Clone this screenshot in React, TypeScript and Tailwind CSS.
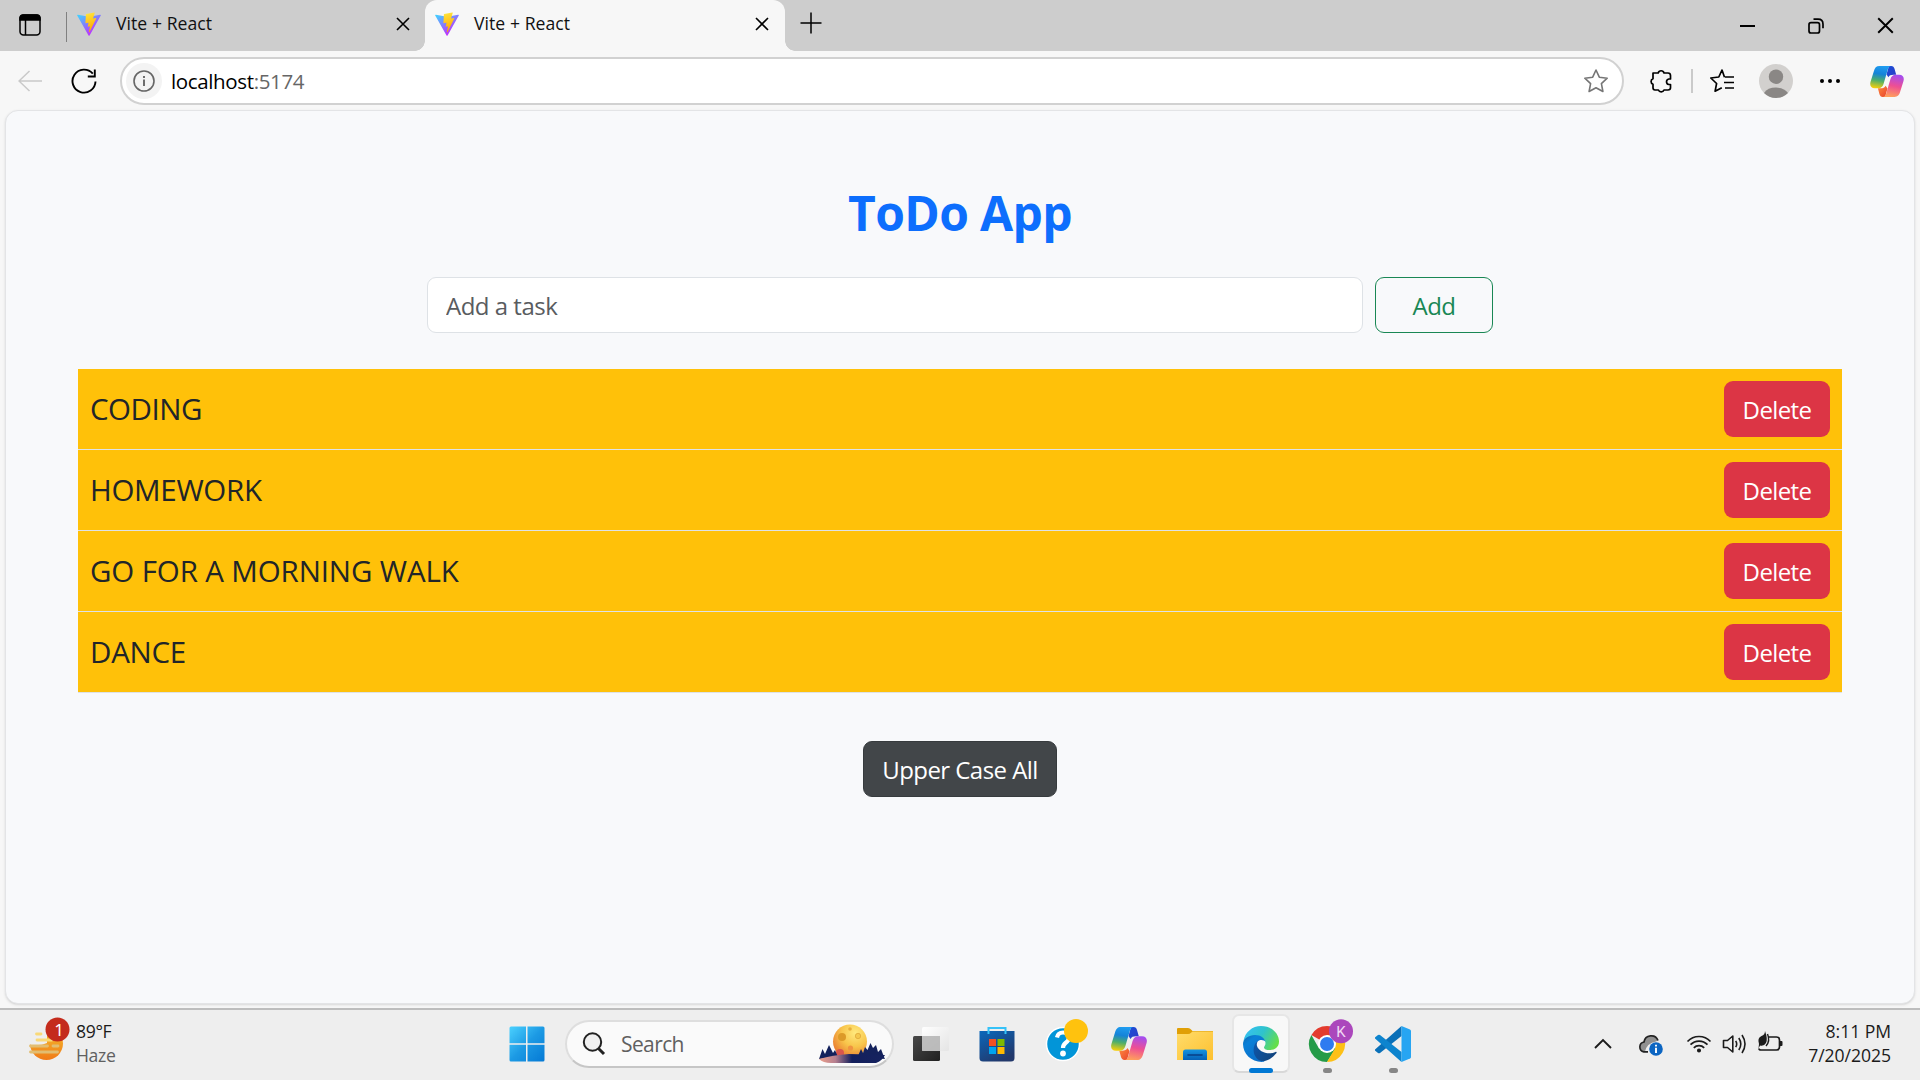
import { ReactNode } from 'react';

const tasks = [
  { text: 'CODING', tracking: 'tracking-[-0.5px]' },
  { text: 'HOMEWORK', tracking: 'tracking-[-0.3px]' },
  { text: 'GO FOR A MORNING WALK', tracking: 'tracking-[-0.12px]' },
  { text: 'DANCE', tracking: 'tracking-[-0.25px]' },
];

function ViteLogo({ id }: { id: string }) {
  return (
    <svg width="24" height="24" viewBox="0 0 32 32" className="shrink-0">
      <defs>
        <linearGradient id={`${id}a`} x1="0" x2="0.6" y1="0.05" y2="0.9">
          <stop offset="0" stopColor="#41D1FF" />
          <stop offset="1" stopColor="#BD34FE" />
        </linearGradient>
        <linearGradient id={`${id}b`} x1="0.4" x2="0.55" y1="0" y2="0.9">
          <stop offset="0" stopColor="#FFEA4A" />
          <stop offset="0.1" stopColor="#FFDD35" />
          <stop offset="1" stopColor="#FFA800" />
        </linearGradient>
      </defs>
      <path fill={`url(#${id}a)`} d="M31.7 4.8 16.8 31.4a.8.8 0 0 1-1.4 0L.3 4.8a.8.8 0 0 1 .9-1.2l14.8 2.6h.3l14.500-2.6a.8.8 0 0 1 .9 1.2Z" />
      <path fill={`url(#${id}b)`} d="M23.100.6 12.200 2.700a.4.4 0 0 0-.3.4l-.7 11.400a.4.4 0 0 0 .5.4l3.100-.7a.4.4 0 0 1 .5.5l-.9 4.500a.4.4 0 0 0 .5.5l1.900-.6a.4.4 0 0 1 .5.5l-1.500 7c-.1.4.5.700.700.3l.2-.3 9-18a.4.4 0 0 0-.4-.6l-3.200.6a.4.4 0 0 1-.5-.5l2.100-7.100a.4.4 0 0 0-.6-.4Z" />
    </svg>
  );
}

function CopilotLogo({ id, className }: { id: string; className: string }) {
  return (
    <svg viewBox="0 0 36 33" className={className}>
      <defs>
        <linearGradient id={`${id}a`} x1="0.5" x2="0.35" y1="0" y2="1">
          <stop offset="0" stopColor="#1f9cf0" />
          <stop offset="0.35" stopColor="#1583d8" />
          <stop offset="0.65" stopColor="#4dae6b" />
          <stop offset="1" stopColor="#f5cf0b" />
        </linearGradient>
        <linearGradient id={`${id}b`} x1="0.6" x2="0.4" y1="0" y2="1">
          <stop offset="0" stopColor="#a44df0" />
          <stop offset="0.5" stopColor="#ee4f93" />
          <stop offset="1" stopColor="#ffa05c" />
        </linearGradient>
        <linearGradient id={`${id}c`} x1="0" x2="1" y1="0" y2="1">
          <stop offset="0" stopColor="#1b4fd8" />
          <stop offset="1" stopColor="#2a3bc5" />
        </linearGradient>
        <linearGradient id={`${id}d`} x1="0" x2="1" y1="0" y2="1">
          <stop offset="0" stopColor="#ff8a3d" />
          <stop offset="1" stopColor="#e8432e" />
        </linearGradient>
      </defs>
      <path fill={`url(#${id}c)`} d="M20 0h2.500c2 0 3 1.300 3.500 3l1.800 6.300H25c-3 0-4.500.7-5.500 2.700L17.500 9Z" />
      <path fill={`url(#${id}d)`} d="M16 33h-2.500c-2 0-3-1.500-3.500-3l-1.700-6.300H11c3 0 4.500-.7 5.500-2.700l2 3Z" />
      <path fill={`url(#${id}a)`} d="M10 0h12.500c-2 0-3 1.500-3.600 3.500l-4.500 15.500c-1 3-2.500 4.800-5.900 4.800H5C1 23.800-.7 21 .5 16.800L4 5.500C5 2 6.500 0 10 0Z" />
      <path fill={`url(#${id}b)`} d="M26 33H13.500c2 0 3-1.500 3.600-3.500L21.600 14c1-3 2.500-4.800 5.900-4.800H31c4 0 5.700 2.800 4.500 7L32 27.500C31 31 29.500 33 26 33Z" />
    </svg>
  );
}

function CloseX({ size = 14 }: { size?: number }) {
  return (
    <svg width={size} height={size} viewBox="0 0 14 14" className="shrink-0" fill="none" stroke="#000" strokeWidth="1.600">
      <path d="m1 1 12 12M13 1 1 13" />
    </svg>
  );
}

function TabBar() {
  return (
    <div className="flex h-[51px] bg-[#cdcdcd] text-[17.6px] tracking-[0.05px] text-[#111]">
      <div className="flex h-[50px] w-[67px] items-center justify-between pl-[19px]">
        <svg width="22" height="22" viewBox="0 0 22 22" fill="none" stroke="#000" strokeWidth="1.500">
          <rect x="1" y="1" width="20" height="20" rx="3.500" />
          <path d="M1 3.500Q1.500 1 4 1h14q2.500 0 3 2.500V6H1Z" fill="#000" />
          <path d="M6.500 6v15" />
        </svg>
        <div className="mt-1 h-[30px] w-[1.500px] bg-[#808080]" />
      </div>
      <div className="flex h-12 w-[358px] items-center pr-[15px] pl-[10px]">
        <ViteLogo id="v1" />
        <span className="-mt-px ml-[15px] flex-1">Vite + React</span>
        <CloseX />
      </div>
      <div className="relative flex h-[51px] w-[360px] items-center rounded-t-[12px] bg-[#f7f7f7] pr-[16px] pb-[3px] pl-[10px]">
        <div className="absolute bottom-0 -left-[10px] size-[10px] bg-[radial-gradient(circle_at_0_0,#cdcdcd_9.500px,#f7f7f7_10px)]" />
        <div className="absolute -right-[10px] bottom-0 size-[10px] bg-[radial-gradient(circle_at_100%_0,#cdcdcd_9.500px,#f7f7f7_10px)]" />
        <ViteLogo id="v2" />
        <span className="-mt-px ml-[15px] flex-1">Vite + React</span>
        <CloseX />
      </div>
      <svg width="22" height="22" viewBox="0 0 22 22" className="mt-[12px] ml-[15px]" stroke="#000" strokeWidth="1.500">
        <path d="M11 .5v21M.5 11h21" />
      </svg>
      <div className="ml-auto flex h-[51px] items-center gap-[53px] pr-[26px]">
        <div className="h-[2px] w-[15px] bg-black" />
        <svg width="16" height="16" viewBox="0 0 16 16" fill="none" stroke="#000" strokeWidth="1.700">
          <rect x="1" y="4.700" width="10.500" height="10.300" rx="2" />
          <path d="M5.500 1.200H10q5 0 5 5v4" />
        </svg>
        <CloseX size={17} />
      </div>
    </div>
  );
}

function Toolbar() {
  return (
    <div className="flex h-[59px] items-center pt-px pr-4 pl-[18px]">
      <svg width="25" height="22" viewBox="0 0 25 22" className="-mt-px" fill="none" stroke="#c9c9c9" strokeWidth="1.500">
        <path d="M24 11H1M11.500 1 1 11l10.500 10" />
      </svg>
      <svg width="26" height="26" viewBox="0 0 26 26" className="ml-7" fill="none" stroke="#000" strokeWidth="1.900">
        <path d="M24.500 13.500A11.500 11.500 0 1 1 21.800 5.700M23.800 1.500v7h-7" />
      </svg>
      <div className="ml-[23px] flex h-12 w-[1504px] items-center rounded-full border-2 border-[#d1d1d1] bg-white pr-[13px] pl-1">
        <div className="flex size-9 items-center justify-center rounded-full bg-[#f3f3f3]">
          <svg width="22" height="22" viewBox="0 0 22 22" fill="none" stroke="#666" strokeWidth="1.600">
            <circle cx="11" cy="11" r="10" />
            <path d="M11 9.500V16M11 6v2" strokeWidth="1.900" />
          </svg>
        </div>
        <span className="ml-[9px] flex-1 text-[20.500px] tracking-[-0.36px] text-black">
          localhost<span className="text-[#666]">:5174</span>
        </span>
        <svg width="26" height="26" viewBox="0 0 26 26" fill="none" stroke="#767676" strokeWidth="1.600" strokeLinejoin="round">
          <path d="m13 2 3.300 7.200 7.900 1-5.800 5.400 1.500 7.900L13 19.700l-6.900 3.800 1.500-7.900-5.800-5.400 7.900-1Z" />
        </svg>
      </div>
      <svg width="24" height="26" viewBox="0 0 24 26" className="ml-[25px]" fill="none" stroke="#000" strokeWidth="1.700" strokeLinejoin="round">
        <path d="M4 5h5.200a3 3 0 0 1 5.800 0h4q2.500 0 2.500 2.500V11h-1.700a2.800 2.800 0 0 0 0 5.500h1.700v3.300q0 2.200-2.500 2.200h-4a3 3 0 0 1-5.600 0H6q-2 0-2-2.200v-3.500a3 3 0 0 1 0-5.600Z" />
      </svg>
      <div className="ml-[18px] h-6 w-[1.500px] bg-[#cacaca]" />
      <svg width="26" height="26" viewBox="0 0 26 26" className="ml-[16px]" fill="none" stroke="#000" strokeWidth="1.700" strokeLinejoin="round">
        <path d="M15.500 9.200 13 2 9.800 9 1.800 10l5.800 5.500-1.500 7.700 6.700-3.500M16 9h9M15 14.500h10M16 20h9" />
      </svg>
      <svg width="34" height="34" viewBox="0 0 34 34" className="-mt-px ml-[24px]">
        <circle cx="17" cy="17" r="17" fill="#d2d0ce" />
        <circle cx="17" cy="12.700" r="7.200" fill="#8a8785" />
        <path d="M5 29a13.500 10 0 0 1 24 0 17 17 0 0 1-24 0Z" fill="#8a8785" />
      </svg>
      <div className="ml-[27px] flex gap-1">
        <i className="size-1 rounded-full bg-black" />
        <i className="size-1 rounded-full bg-black" />
        <i className="size-1 rounded-full bg-black" />
      </div>
      <CopilotLogo id="cpA" className="ml-auto h-[31px] w-[34px]" />
    </div>
  );
}

function TodoPage() {
  return (
    <div className="mx-[5px] flex h-[894px] flex-col items-center rounded-[13px] border border-[#e3e4e6] bg-[#f8f9fb] px-[72px] text-2xl text-[#212529] shadow-sm">
      <h1 className="mt-[73px] text-[48px] leading-[58px] font-bold tracking-[-0.650px] text-[#0d6efd]">ToDo App</h1>
      <div className="mt-[35px] flex gap-3">
        <input
          placeholder="Add a task"
          className="h-14 w-[936px] rounded-[9px] border border-[#dee2e6] bg-white px-[18px] pt-px tracking-[-0.5px] outline-none placeholder:text-[#595c5f]"
        />
        <button className="h-14 w-[118px] rounded-[9px] border border-[#198754] pt-px tracking-[-0.5px] text-[#198754]">Add</button>
      </div>
      <ul className="mt-9 w-full">
        {tasks.map((task) => (
          <li key={task.text} className="flex h-[81px] items-center justify-between border-b border-[#dee2e6] bg-[#ffc109] px-3 text-[29.500px]">
            <span className={task.tracking}>{task.text}</span>
            <button className="h-14 w-[106px] rounded-[9px] bg-[#dc3545] pt-px text-2xl tracking-[-0.6px] text-white">Delete</button>
          </li>
        ))}
      </ul>
      <button className="mt-12 h-14 w-[194px] rounded-[9px] border border-[#373b3e] bg-[#424649] pt-px tracking-[-0.55px] text-white">Upper Case All</button>
    </div>
  );
}

function WeatherWidget() {
  return (
    <div className="flex w-[509px] items-start pl-7">
      <svg width="44" height="46" viewBox="0 0 44 46" className="mt-[6px]">
        <defs>
          <linearGradient id="sun" x1="0.5" x2="0.5" y1="0" y2="1">
            <stop offset="0" stopColor="#f5c330" />
            <stop offset="1" stopColor="#f07a18" />
          </linearGradient>
        </defs>
        <circle cx="18.500" cy="27.500" r="16.500" fill="url(#sun)" />
        <path d="M0 8h19v19q-6 3-16 2L0 27Z" fill="#eee" />
        <g strokeWidth="2.800" strokeLinecap="round">
          <path d="M8.500 18H13M9 24h15" stroke="#f9d978" />
          <path d="M2.500 30h17M25 30h5M2.500 36h27" stroke="#e2bd71" />
        </g>
        <circle cx="29.500" cy="13.500" r="12" fill="#c42b1c" />
        <text x="31" y="19.500" textAnchor="middle" fontSize="17" fill="#fff" fontFamily="Noto Sans">1</text>
      </svg>
      <div className="mt-[9px] ml-[4px] text-[17.600px] leading-6 tracking-[-0.35px] text-[#1b1b1b]">
        <div>89°F</div>
        <div className="text-[#606060]">Haze</div>
      </div>
    </div>
  );
}

function SearchBox() {
  return (
    <div className="ml-[20px] flex h-12 w-[329px] items-center rounded-full border-2 border-[#dedede] border-b-[#c6c6c6] bg-[#fafafa] pr-[7px] pl-[15px]">
      <svg width="24" height="24" viewBox="0 0 24 24" fill="none" stroke="#222">
        <circle cx="10.500" cy="10" r="8.700" fill="#f0f0f0" strokeWidth="2" />
        <path d="m16.500 16.500 5.500 5.500" strokeWidth="3" />
      </svg>
      <span className="ml-[15px] flex-1 pt-[2px] text-[21px] tracking-[-0.6px] text-[#606060]">Search</span>
      <svg width="66" height="40" viewBox="0 0 66 40">
        <defs>
          <radialGradient id="moon" cx="0.65" cy="0.25" r="0.8">
            <stop offset="0" stopColor="#ffe97d" />
            <stop offset="0.5" stopColor="#f8c54b" />
            <stop offset="1" stopColor="#e8762e" />
          </radialGradient>
          <linearGradient id="hill">
            <stop offset="0.05" stopColor="#e29a8c" />
            <stop offset="0.25" stopColor="#b57f90" />
            <stop offset="0.5" stopColor="#131f5c" />
            <stop offset="1" stopColor="#16235f" />
          </linearGradient>
        </defs>
        <circle cx="31" cy="17.500" r="17" fill="url(#moon)" />
        <circle cx="23" cy="13" r="4" fill="#dc9a28" />
        <circle cx="39" cy="12" r="2.700" fill="#f4c84e" stroke="#d99c30" strokeWidth=".6" />
        <circle cx="31.500" cy="24" r="2.600" fill="#f09440" />
        <circle cx="31" cy="5" r="1.800" fill="#e8ae3a" />
        <circle cx="21" cy="29" r="4" fill="#d9564c" />
        <path fill="#14225c" d="m0 35 3.500-10 2.500 5 4-9 4 8 2-3 3 7ZM39 32l3-7 2 4 2-6 2.500 3 3-7 2.500 5 3-3 2 7 3-3 3 8 1 2Z" />
        <path fill="url(#hill)" d="M0 35q14-4 30-5l36 1q-3 6-9 8H12Q4 39 0 35Z" />
      </svg>
    </div>
  );
}

function Cell({ children, active, bar }: { children: ReactNode; active?: boolean; bar?: 'wide' | 'dot' }) {
  return (
    <div className="relative flex h-[70px] w-[66px] items-center justify-center pb-[2px]">
      {active && <div className="absolute top-[4px] left-[4px] h-[59px] w-[58px] rounded-[7px] border-2 border-[#e6e6e6] border-b-[#d8d8d8] bg-[#f8f8f8]" />}
      <div className="relative">{children}</div>
      {bar === 'wide' && <div className="absolute top-[58px] left-[21px] h-[5px] w-6 rounded-full bg-[#0078d4]" />}
      {bar === 'dot' && <div className="absolute top-[58px] left-[29px] h-[5px] w-[9px] rounded-full bg-[#868686]" />}
    </div>
  );
}

function TaskIcons() {
  return (
    <div className="ml-[3.500px] flex">
      <Cell>
        <svg width="36" height="36" viewBox="0 0 36 36">
          <defs>
            <linearGradient id="tvD" x1="0" x2="1" y1="0" y2="1"><stop stopColor="#484848" /><stop offset="1" stopColor="#202020" /></linearGradient>
            <linearGradient id="tvL" x1="0" x2="1" y1="0" y2="1"><stop stopColor="#fff" stopOpacity=".95" /><stop offset="1" stopColor="#e4e4e4" stopOpacity=".9" /></linearGradient>
          </defs>
          <rect y="10" width="27" height="25" rx="1.500" fill="url(#tvD)" />
          <rect x="9" y="1" width="27" height="24" rx="1.500" fill="url(#tvL)" />
          <rect x="9" y="10" width="18" height="15" fill="#b5b5b5" fillOpacity=".85" />
        </svg>
      </Cell>
      <Cell>
        <svg width="36" height="36" viewBox="0 0 36 36">
          <defs>
            <linearGradient id="bag" x1="0" x2=".6" y1="0" y2="1"><stop stopColor="#0a68bc" /><stop offset="1" stopColor="#22386b" /></linearGradient>
          </defs>
          <path d="M.5 5h35v27q0 3.500-3.500 3.500H4Q.5 35.500.5 32Z" fill="url(#bag)" />
          <path d="M9.500 8V2h17v6" fill="none" stroke="#35c2f8" strokeWidth="2" />
          <path d="M10 13h7v7h-7z" fill="#f25022" />
          <path d="M18.500 13h7v7h-7z" fill="#7fba00" />
          <path d="M10 21h7v7h-7z" fill="#00a4ef" />
          <path d="M18.500 21h7v7h-7z" fill="#ffb900" />
        </svg>
      </Cell>
      <Cell>
        <svg width="50" height="50" viewBox="0 0 50 50">
          <circle cx="25" cy="25" r="16.500" fill="#0295d8" stroke="#fff" strokeWidth="1.500" />
          <path d="M19 18.500q1-5 6-5 6 0 6 5 0 3-3.500 5.500-2.500 2-2.500 5" fill="none" stroke="#fff" strokeWidth="4.200" />
          <circle cx="25" cy="34.500" r="2.900" fill="#fff" />
          <circle cx="38" cy="12" r="12" fill="#ffc20e" />
        </svg>
      </Cell>
      <Cell><CopilotLogo id="cpB" className="mt-[-1px] h-[33px] w-9" /></Cell>
      <Cell>
        <svg width="36" height="36" viewBox="0 0 36 36">
          <defs>
            <linearGradient id="fold" x1="0" x2="1" y1="0" y2="1"><stop stopColor="#ffdc6b" /><stop offset="1" stopColor="#fdc02f" /></linearGradient>
            <linearGradient id="foldB" x1="0" x2="0" y1="0" y2="1"><stop stopColor="#1694e0" /><stop offset="1" stopColor="#0560b6" /></linearGradient>
          </defs>
          <path d="M0 3q0-1 1-1h10q2 0 3 1.500L15.500 5H36v5H0Z" fill="#e09f06" />
          <path d="M0 8h11q2 0 3-1.200L15.500 5.500H36V34H0Z" fill="url(#fold)" />
          <path d="M6 34V26q0-2.500 2.500-2.500h19Q30 23.500 30 26v8Z" fill="url(#foldB)" />
          <path d="M11 29h14" stroke="#083f85" strokeWidth="1.600" strokeLinecap="round" />
        </svg>
      </Cell>
      <Cell active bar="wide">
        <svg width="36" height="36" viewBox="0 0 36 36">
          <defs>
            <linearGradient id="eT" x1="0" x2="1" y1=".2" y2=".6"><stop stopColor="#36bff5" /><stop offset=".5" stopColor="#2fc3cc" /><stop offset="1" stopColor="#66df48" /></linearGradient>
            <linearGradient id="eL" x1="0" x2=".7" y1="0" y2="1"><stop stopColor="#0f66ac" /><stop offset=".3" stopColor="#0a80d8" /><stop offset="1" stopColor="#0b6cc6" /></linearGradient>
            <linearGradient id="eB" x1="0" x2="1" y1="0" y2=".5"><stop stopColor="#0d57ad" /><stop offset="1" stopColor="#12457f" /></linearGradient>
          </defs>
          <path d="M.5 15C2 6 9.500 0 18 0c10 0 18 7 18 15.500 0 5.500-4 8.500-9 8.500-3.500 0-6-1-6-2.600 0-1 1.500-1.800 1.500-4.400 0-4-4.500-6.500-10-6.500Q4 10.500.5 15Z" fill="url(#eT)" />
          <path d="M0 18C0 12.500 6 9 12 9c6 0 10 3.500 10.500 7-2-3-9-3-10 4-1 7 4 12 10 13.500L21 35.800C9.500 37 0 28.500 0 18Z" fill="url(#eL)" />
          <path d="M15.500 14.500c-7 4.500-6.500 16 1.500 20 3 1.500 10 .5 16.500-7.500.5-.8-.2-1.500-1-1-7.500 3.500-17-.5-18.500-6-.6-2 .2-4.200 1.500-5.500Z" fill="url(#eB)" />
        </svg>
      </Cell>
      <Cell bar="dot">
        <svg width="52" height="50" viewBox="0 0 52 50">
          <path d="M26 25 10.400 16A18 18 0 0 1 41.600 16H26Z" fill="#e33b2e" />
          <path d="M10.400 16A18 18 0 0 0 26 43l9-14-17 .6Z" fill="#259b48" />
          <path d="M26 43a18 18 0 0 0 15.600-27H26l8 13.500Z" fill="#fdc016" />
          <circle cx="26" cy="25" r="9" fill="#fff" />
          <circle cx="26" cy="25" r="7" fill="#2f7bf0" />
          <circle cx="40" cy="12.200" r="12" fill="#ab47bc" />
          <text x="40" y="17.500" textAnchor="middle" fontSize="15" fill="#f0d8f4" fontFamily="Roboto">K</text>
        </svg>
      </Cell>
      <Cell bar="dot">
        <svg width="36" height="36" viewBox="0 0 36 36">
          <path d="M0 23.500 26.500 0v10L5 27q-1 .7-2 0l-2.500-2Q-.5 24.300 0 23.500Z" fill="#0a70b8" />
          <path d="M0 12.500 26.500 36V26L5 9q-1-.7-2 0L.5 11Q-.5 11.700 0 12.500Z" fill="#0d84ce" />
          <path d="M26.500 0 35 3.500q1 .5 1 1.500v26q0 1-1 1.500L26.500 36Z" fill="#27a5f2" />
        </svg>
      </Cell>
    </div>
  );
}

function SystemTray() {
  return (
    <div className="ml-auto flex pr-[29px] text-[#1b1b1b]">
      <svg width="18" height="11" viewBox="0 0 18 11" className="mt-[28px]" fill="none" stroke="#1b1b1b" strokeWidth="1.900">
        <path d="m1 10 8-8 8 8" />
      </svg>
      <svg width="26" height="22" viewBox="0 0 26 22" className="mt-[25px] ml-[26px]">
        <path d="M5.500 16.500a5 5 0 0 1 .3-9.500A7.300 7.300 0 0 1 19.500 5.500l-1.500 1Q9 8 7 16.500Z" fill="#909090" />
        <path d="M10 16.800H5.800A5 5 0 0 1 6 7 7.300 7.300 0 0 1 20 5.500" fill="none" stroke="#222" strokeWidth="1.700" />
        <circle cx="18" cy="14" r="6.800" fill="#0b65c2" />
        <path d="M18 12.700V18M18 9.800v1.800" stroke="#fff" strokeWidth="1.900" />
      </svg>
      <svg width="26" height="20" viewBox="0 0 26 20" className="mt-[24px] ml-[22px]" fill="none" stroke="#1b1b1b" strokeWidth="1.700">
        <path d="M1.500 7.500a15.700 15.700 0 0 1 23 0M4.500 10.700a11.700 11.700 0 0 1 17 0M7.800 13.800a7.200 7.200 0 0 1 10.400 0" />
        <circle cx="13" cy="16.500" r="1.200" fill="#1b1b1b" />
      </svg>
      <svg width="26" height="22" viewBox="0 0 26 22" className="mt-[23px] ml-[10px]" fill="none" stroke="#1b1b1b" strokeWidth="1.600" strokeLinejoin="round">
        <path d="M1.500 7.500h4L10.800 3v16L5.500 14.500h-4Z" />
        <path d="M13.700 7.800q2 3.200 0 6.400M16.800 5q4 6 0 12M20 2q6 9 0 18" />
      </svg>
      <svg width="26" height="22" viewBox="0 0 26 22" className="mt-[21px] ml-[9px]">
        <path d="M12 6h7.500q3 0 3 3v7q0 3-3 3H4q-2 0-2-1.500" fill="none" stroke="#1b1b1b" strokeWidth="1.700" />
        <path d="M23 10h1.500q1 0 1 1v3q0 1-1 1H23Z" fill="#1b1b1b" />
        <path d="M8 0q3 8 1 12-2 3.500-6 2.500l-1.500 3 .5-4.500Q0 7 4.500 5 8 4 8 0Z" fill="#1b1b1b" />
        <path d="M10.500 3q3 7-1.500 12" stroke="#1b1b1b" strokeWidth="1.400" fill="none" />
      </svg>
      <div className="mt-[9px] w-[108px] text-right text-[17.600px] leading-6 tracking-[-0.05px]">
        <div>8:11 PM</div>
        <div>7/20/2025</div>
      </div>
    </div>
  );
}

function Taskbar() {
  return (
    <div className="mt-auto flex h-[72px] border-t-2 border-[#bdbdbd] bg-[#eee]">
      <WeatherWidget />
      <div className="flex h-[68px] items-center">
        <svg width="36" height="36" viewBox="0 0 36 36">
          <defs>
            <linearGradient id="win" x1="0" x2="1" y1="0" y2="1"><stop stopColor="#4cd2ff" /><stop offset=".5" stopColor="#1c9ae4" /><stop offset="1" stopColor="#0478d4" /></linearGradient>
          </defs>
          <mask id="winm"><path fill="#fff" d="M2 .5h15v16.700H.5V2Q.5.5 2 .5Zm16.500 0H34q1.500 0 1.500 1.500v15.200h-17ZM.5 18.700H17v16.800H2q-1.500 0-1.500-1.500Zm18 0h17V34q0 1.500-1.500 1.500H18.500Z" /></mask>
          <rect width="36" height="36" fill="url(#win)" mask="url(#winm)" />
        </svg>
        <SearchBox />
      </div>
      <TaskIcons />
      <SystemTray />
    </div>
  );
}

export default function App() {
  return (
    <div className="flex h-[1080px] w-[1920px] flex-col overflow-hidden bg-[#f7f7f7] font-['Open_Sans',sans-serif]">
      <TabBar />
      <Toolbar />
      <TodoPage />
      <Taskbar />
    </div>
  );
}
